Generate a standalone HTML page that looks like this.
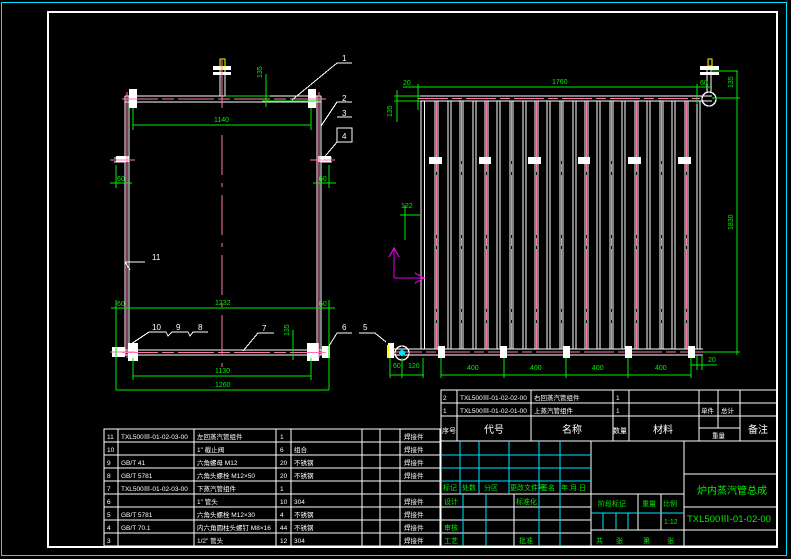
<!DOCTYPE html>
<html><head><meta charset="utf-8"><style>
html,body{margin:0;padding:0;background:#000;}
svg{display:block;}
text{font-family:"Liberation Sans","Noto Sans CJK SC",sans-serif;}
</style></head><body>
<svg width="791" height="559" viewBox="0 0 791 559" xmlns="http://www.w3.org/2000/svg" shape-rendering="crispEdges">
<rect width="791" height="559" fill="#000"/>
<rect x="1.5" y="2.5" width="785" height="553" fill="none" stroke="#00e5ff" stroke-width="1"/>
<rect x="48" y="12" width="729" height="535" fill="none" stroke="#fff" stroke-width="2"/>

<!-- LEFT VIEW -->
<g stroke="#fff" stroke-width="1.3" fill="none">
<line x1="125" y1="96" x2="321" y2="96"/><line x1="125" y1="102" x2="321" y2="102"/>
<line x1="125" y1="350" x2="321" y2="350"/><line x1="125" y1="355" x2="321" y2="355"/>
<line x1="125" y1="96" x2="125" y2="355"/><line x1="129" y1="96" x2="129" y2="355"/>
<line x1="317" y1="96" x2="317" y2="355"/><line x1="321" y1="96" x2="321" y2="355"/>
<line x1="220" y1="68" x2="220" y2="96"/><line x1="225" y1="68" x2="225" y2="96"/>
<line x1="112" y1="350" x2="125" y2="350"/><line x1="112" y1="355" x2="125" y2="355"/>
<line x1="321" y1="350" x2="330" y2="350"/><line x1="321" y1="355" x2="330" y2="355"/>
<line x1="114" y1="158" x2="125" y2="158"/><line x1="114" y1="162" x2="125" y2="162"/>
<line x1="321" y1="158" x2="332" y2="158"/><line x1="321" y1="162" x2="332" y2="162"/>
</g>
<g fill="#fff">
<rect x="129" y="89" width="8" height="19"/><rect x="308" y="89" width="8" height="19"/>
<rect x="213" y="66" width="18" height="4"/><rect x="213" y="72" width="18" height="3"/>
<rect x="128" y="343" width="10" height="18"/><rect x="307" y="343" width="12" height="18"/>
<rect x="116" y="156" width="13" height="6"/><rect x="318" y="156" width="13" height="6"/>
<rect x="112" y="347" width="13" height="10"/><rect x="322" y="346" width="8" height="12"/>
</g>
<g stroke="#ff77b0" stroke-width="1" fill="none">
<line x1="122" y1="99" x2="326" y2="99" stroke-dasharray="36 4 12 4"/>
<line x1="122" y1="352.5" x2="326" y2="352.5" stroke-dasharray="36 4 12 4"/>
<line x1="127" y1="92" x2="127" y2="358"/><line x1="319" y1="92" x2="319" y2="358"/>
<line x1="222" y1="60" x2="222" y2="108"/>
<line x1="222" y1="135" x2="222" y2="375" stroke-dasharray="40 8 4 8"/>
<line x1="110" y1="160" x2="135" y2="160"/><line x1="310" y1="160" x2="335" y2="160"/>
<line x1="110" y1="352" x2="135" y2="352"/>
</g>
<rect x="220" y="59" width="5" height="9" fill="none" stroke="#ff0" stroke-width="1"/>
<g stroke="#00ee00" stroke-width="1" fill="none">
<line x1="133" y1="125" x2="311" y2="125"/><line x1="133" y1="108" x2="133" y2="130"/><line x1="311" y1="108" x2="311" y2="130"/>
<line x1="266" y1="74" x2="266" y2="107"/><line x1="225" y1="96" x2="270" y2="96"/><line x1="262" y1="101" x2="320" y2="101"/>
<line x1="110" y1="183" x2="132" y2="183"/><line x1="116" y1="165" x2="116" y2="188"/>
<line x1="313" y1="183" x2="336" y2="183"/><line x1="329" y1="165" x2="329" y2="188"/>
<line x1="111" y1="308" x2="335" y2="308"/>
<line x1="116" y1="300" x2="116" y2="390"/><line x1="329" y1="300" x2="329" y2="390"/>
<line x1="133" y1="376" x2="311" y2="376"/><line x1="133" y1="358" x2="133" y2="380"/><line x1="311" y1="358" x2="311" y2="380"/>
<line x1="116" y1="390" x2="329" y2="390"/>
<line x1="293" y1="330" x2="293" y2="360"/>
</g>
<g fill="#00ee00" font-size="7">
<text x="214" y="122">1140</text><text x="215" y="305">1232</text><text x="215" y="373">1130</text><text x="215" y="387">1260</text>
<text x="117" y="181">60</text><text x="319" y="181">60</text><text x="117" y="306">60</text><text x="319" y="306">60</text>
<text x="264" y="80" transform="rotate(-90 262 80)">135</text><text x="291" y="338" transform="rotate(-90 289 338)">135</text>
</g>
<g stroke="#fff" stroke-width="1" fill="none">
<polyline points="292,100 337,63 352,63"/><polyline points="321,126 337,102 352,102"/>
<line x1="337" y1="117" x2="352" y2="117"/><rect x="337" y="128" width="15" height="14"/>
<polyline points="322,160 337,142"/>
<polyline points="128,346 149,332 166,332 168,336 172,332 188,332 190,336 193,332 208,332"/>
<polyline points="243,351 258,333 274,333"/>
<polyline points="329,346 337,333 352,333"/>
<polyline points="386,342 375,333 359,333"/>
<polyline points="130,270 125,262 145,262"/>
</g>
<g fill="#fff" font-size="8">
<text x="342" y="61">1</text><text x="342" y="101">2</text><text x="342" y="116">3</text><text x="342" y="139">4</text>
<text x="152" y="330">10</text><text x="176" y="330">9</text><text x="198" y="330">8</text><text x="262" y="331">7</text>
<text x="342" y="330">6</text><text x="363" y="330">5</text><text x="152" y="260">11</text>
</g>

<!-- RIGHT VIEW -->
<g stroke="#fff" stroke-width="1.4">
<line x1="418" y1="96" x2="712" y2="96"/><line x1="418" y1="101" x2="712" y2="101"/>
<line x1="392" y1="349" x2="703" y2="349"/><line x1="392" y1="355" x2="703" y2="355"/>
</g>
<g stroke="#ff77b0" stroke-width="1">
<line x1="418" y1="98.5" x2="700" y2="98.5" stroke-dasharray="30 4 10 4"/>
<line x1="392" y1="352" x2="703" y2="352" stroke-dasharray="30 4 10 4"/>
</g>
<g stroke="#fff" stroke-width="1.2">
<line x1="421" y1="101" x2="421" y2="349"/><line x1="424.5" y1="101" x2="424.5" y2="349"/>
<line x1="435" y1="101" x2="435" y2="349"/><line x1="438" y1="101" x2="438" y2="349"/>
<line x1="448" y1="101" x2="448" y2="349"/><line x1="451" y1="101" x2="451" y2="349"/>
<line x1="460" y1="101" x2="460" y2="349"/><line x1="463" y1="101" x2="463" y2="349"/>
<line x1="473" y1="101" x2="473" y2="349"/><line x1="476" y1="101" x2="476" y2="349"/>
<line x1="485" y1="101" x2="485" y2="349"/><line x1="488" y1="101" x2="488" y2="349"/>
<line x1="497" y1="101" x2="497" y2="349"/><line x1="500" y1="101" x2="500" y2="349"/>
<line x1="510" y1="101" x2="510" y2="349"/><line x1="513" y1="101" x2="513" y2="349"/>
<line x1="523" y1="101" x2="523" y2="349"/><line x1="526" y1="101" x2="526" y2="349"/>
<line x1="535" y1="101" x2="535" y2="349"/><line x1="538" y1="101" x2="538" y2="349"/>
<line x1="547" y1="101" x2="547" y2="349"/><line x1="550" y1="101" x2="550" y2="349"/>
<line x1="560" y1="101" x2="560" y2="349"/><line x1="563" y1="101" x2="563" y2="349"/>
<line x1="573" y1="101" x2="573" y2="349"/><line x1="576" y1="101" x2="576" y2="349"/>
<line x1="585" y1="101" x2="585" y2="349"/><line x1="588" y1="101" x2="588" y2="349"/>
<line x1="597" y1="101" x2="597" y2="349"/><line x1="600" y1="101" x2="600" y2="349"/>
<line x1="610" y1="101" x2="610" y2="349"/><line x1="613" y1="101" x2="613" y2="349"/>
<line x1="622" y1="101" x2="622" y2="349"/><line x1="625" y1="101" x2="625" y2="349"/>
<line x1="635" y1="101" x2="635" y2="349"/><line x1="638" y1="101" x2="638" y2="349"/>
<line x1="647" y1="101" x2="647" y2="349"/><line x1="650" y1="101" x2="650" y2="349"/>
<line x1="660" y1="101" x2="660" y2="349"/><line x1="663" y1="101" x2="663" y2="349"/>
<line x1="672" y1="101" x2="672" y2="349"/><line x1="675" y1="101" x2="675" y2="349"/>
<line x1="685" y1="101" x2="685" y2="349"/><line x1="688" y1="101" x2="688" y2="349"/>
<line x1="697" y1="101" x2="697" y2="349"/><line x1="700" y1="101" x2="700" y2="349"/>
</g>
<g stroke="#ff77b0" stroke-width="1" stroke-dasharray="60 3 8 3">
<line x1="436.5" y1="101" x2="436.5" y2="349"/><line x1="461.5" y1="101" x2="461.5" y2="349"/>
<line x1="486.5" y1="101" x2="486.5" y2="349"/><line x1="511.5" y1="101" x2="511.5" y2="349"/>
<line x1="536.5" y1="101" x2="536.5" y2="349"/><line x1="561.5" y1="101" x2="561.5" y2="349"/>
<line x1="586.5" y1="101" x2="586.5" y2="349"/><line x1="611.5" y1="101" x2="611.5" y2="349"/>
<line x1="636.5" y1="101" x2="636.5" y2="349"/><line x1="661.5" y1="101" x2="661.5" y2="349"/>
<line x1="686.5" y1="101" x2="686.5" y2="349"/>
</g>
<g fill="#fff">
<rect x="429" y="157" width="13" height="7"/><rect x="479" y="157" width="12" height="7"/><rect x="528" y="157" width="13" height="7"/>
<rect x="578" y="157" width="12" height="7"/><rect x="628" y="157" width="13" height="7"/><rect x="678" y="157" width="13" height="7"/>
<rect x="438" y="346" width="7" height="12"/><rect x="500" y="346" width="7" height="12"/><rect x="563" y="346" width="7" height="12"/>
<rect x="625" y="346" width="7" height="12"/><rect x="688" y="346" width="7" height="12"/>
<rect x="700" y="66" width="19" height="4"/><rect x="700" y="72" width="19" height="3"/>
<rect x="388" y="343" width="6" height="15"/>
</g>
<g fill="none" stroke="#fff" stroke-width="1.3">
<circle cx="709" cy="99" r="7"/><circle cx="402" cy="353" r="7"/>
<line x1="707" y1="66" x2="707" y2="92"/><line x1="711" y1="66" x2="711" y2="92"/>
</g>
<circle cx="402" cy="353" r="3" fill="#00e5ff"/>
<rect x="387" y="345" width="2" height="13" fill="#ff0"/>
<rect x="708" y="59" width="4" height="7" fill="none" stroke="#ff0"/>
<g stroke="#e000e0" stroke-width="1.2" fill="none">
<polyline points="394,278 394,248"/><polyline points="389,257 394,248 399,257"/>
<polyline points="394,278 424,278"/><polyline points="415,273 424,278 415,283"/>
</g>
<g stroke="#00ee00" stroke-width="1" fill="none">
<line x1="403" y1="87" x2="712" y2="87"/><line x1="418" y1="84" x2="418" y2="110"/><line x1="697" y1="84" x2="697" y2="104"/>
<line x1="394" y1="96" x2="420" y2="96"/><line x1="394" y1="101" x2="420" y2="101"/><line x1="397" y1="90" x2="397" y2="122"/>
<line x1="712" y1="71" x2="738" y2="71"/><line x1="712" y1="98" x2="740" y2="98"/>
<line x1="737" y1="71" x2="737" y2="355"/><line x1="703" y1="352" x2="740" y2="352"/>
<line x1="400" y1="215" x2="420" y2="215"/><line x1="405" y1="205" x2="405" y2="240"/>
<line x1="390" y1="375" x2="424" y2="375"/><line x1="390" y1="358" x2="390" y2="378"/><line x1="402" y1="358" x2="402" y2="378"/><line x1="423" y1="358" x2="423" y2="378"/>
<line x1="441" y1="375" x2="691" y2="375"/><line x1="441" y1="358" x2="441" y2="378"/><line x1="504" y1="358" x2="504" y2="378"/>
<line x1="566" y1="358" x2="566" y2="378"/><line x1="628" y1="358" x2="628" y2="378"/><line x1="691" y1="358" x2="691" y2="378"/>
<line x1="691" y1="365" x2="717" y2="365"/><line x1="697" y1="355" x2="697" y2="370"/><line x1="702" y1="355" x2="702" y2="370"/>
</g>
<g fill="#00ee00" font-size="7">
<text x="552" y="84">1760</text><text x="403" y="85">20</text><text x="700" y="85">60</text>
<text x="393" y="368">60</text><text x="408" y="368">120</text>
<text x="467" y="370">400</text><text x="530" y="370">400</text><text x="592" y="370">400</text><text x="655" y="370">400</text>
<text x="708" y="362">20</text><text x="401" y="208">122</text>
<text x="392" y="117" transform="rotate(-90 392 117)">135</text>
<text x="735" y="90" transform="rotate(-90 733 90)">135</text>
<text x="735" y="232" transform="rotate(-90 733 232)">1830</text>
</g>

<!-- LEFT PARTS TABLE -->
<g stroke="#fff" stroke-width="1.3" fill="none">
<rect x="104" y="429" width="336" height="117"/>
<line x1="104" y1="442" x2="440" y2="442"/><line x1="104" y1="455" x2="440" y2="455"/>
<line x1="104" y1="468" x2="440" y2="468"/><line x1="104" y1="481" x2="440" y2="481"/>
<line x1="104" y1="494" x2="440" y2="494"/><line x1="104" y1="507" x2="440" y2="507"/>
<line x1="104" y1="520" x2="440" y2="520"/><line x1="104" y1="533" x2="440" y2="533"/>
<line x1="118" y1="429" x2="118" y2="546"/><line x1="194" y1="429" x2="194" y2="546"/>
<line x1="276" y1="429" x2="276" y2="546"/><line x1="291" y1="429" x2="291" y2="546"/>
<line x1="362" y1="429" x2="362" y2="546"/><line x1="380" y1="429" x2="380" y2="546"/>
<line x1="400" y1="429" x2="400" y2="546"/>
</g>
<g fill="#fff" font-size="6.5">
<text x="107" y="439">11</text><text x="121" y="439">TXL500Ⅲ-01-02-03-00</text><text x="197" y="439">左回蒸汽管组件</text><text x="280" y="439">1</text>
<text x="107" y="452">10</text><text x="197" y="452">1" 截止阀</text><text x="280" y="452">6</text><text x="294" y="452">组合</text>
<text x="107" y="465">9</text><text x="121" y="465">GB/T 41</text><text x="197" y="465">六角螺母 M12</text><text x="280" y="465">20</text><text x="294" y="465">不锈钢</text>
<text x="107" y="478">8</text><text x="121" y="478">GB/T 5781</text><text x="197" y="478">六角头螺栓 M12×50</text><text x="280" y="478">20</text><text x="294" y="478">不锈钢</text>
<text x="107" y="491">7</text><text x="121" y="491">TXL500Ⅲ-01-02-03-00</text><text x="197" y="491">下蒸汽管组件</text><text x="280" y="491">1</text>
<text x="107" y="504">6</text><text x="197" y="504">1" 管头</text><text x="280" y="504">10</text><text x="294" y="504">304</text>
<text x="107" y="517">5</text><text x="121" y="517">GB/T 5781</text><text x="197" y="517">六角头螺栓 M12×30</text><text x="280" y="517">4</text><text x="294" y="517">不锈钢</text>
<text x="107" y="530">4</text><text x="121" y="530">GB/T 70.1</text><text x="197" y="530">内六角圆柱头螺钉 M8×16</text><text x="280" y="530">44</text><text x="294" y="530">不锈钢</text>
<text x="107" y="543">3</text><text x="197" y="543">1/2" 管头</text><text x="280" y="543">12</text><text x="294" y="543">304</text>
<text x="404" y="439">焊接件</text><text x="404" y="452">焊接件</text><text x="404" y="465">焊接件</text><text x="404" y="478">焊接件</text>
<text x="404" y="504">焊接件</text><text x="404" y="517">焊接件</text><text x="404" y="530">焊接件</text><text x="404" y="543">焊接件</text>
</g>

<!-- TITLE BLOCK -->
<g stroke="#fff" stroke-width="1.3" fill="none">
<rect x="441" y="390" width="336" height="156"/>
<line x1="441" y1="403" x2="777" y2="403"/><line x1="441" y1="416" x2="777" y2="416"/><line x1="441" y1="441" x2="777" y2="441"/>
<line x1="457" y1="390" x2="457" y2="441"/><line x1="531" y1="390" x2="531" y2="441"/><line x1="613" y1="390" x2="613" y2="441"/>
<line x1="629" y1="390" x2="629" y2="441"/><line x1="699" y1="390" x2="699" y2="441"/><line x1="718" y1="390" x2="718" y2="428"/>
<line x1="740" y1="390" x2="740" y2="441"/><line x1="699" y1="428" x2="740" y2="428"/>
<line x1="591" y1="441" x2="591" y2="546"/><line x1="684" y1="441" x2="684" y2="546"/>
<line x1="684" y1="474" x2="777" y2="474"/><line x1="684" y1="507" x2="777" y2="507"/><line x1="684" y1="530" x2="777" y2="530"/>
<line x1="591" y1="494" x2="684" y2="494"/><line x1="591" y1="530" x2="684" y2="530"/>
<line x1="638" y1="494" x2="638" y2="530"/><line x1="661" y1="494" x2="661" y2="530"/>
<line x1="441" y1="494" x2="591" y2="494"/><line x1="441" y1="507" x2="591" y2="507"/><line x1="441" y1="520" x2="591" y2="520"/><line x1="441" y1="533" x2="591" y2="533"/>
<line x1="514" y1="494" x2="514" y2="546"/>
<line x1="420" y1="429" x2="441" y2="429"/>
</g>
<g stroke="#00e5ff" stroke-width="1" fill="none">
<line x1="441" y1="455" x2="591" y2="455"/><line x1="441" y1="468" x2="591" y2="468"/><line x1="441" y1="481" x2="591" y2="481"/>
<line x1="460" y1="441" x2="460" y2="494"/><line x1="479" y1="441" x2="479" y2="494"/><line x1="509" y1="441" x2="509" y2="494"/>
<line x1="539" y1="441" x2="539" y2="546"/><line x1="560" y1="441" x2="560" y2="546"/>
<line x1="463" y1="494" x2="463" y2="546"/><line x1="486" y1="494" x2="486" y2="546"/>
<line x1="591" y1="513" x2="684" y2="513"/><line x1="603" y1="513" x2="603" y2="530"/><line x1="616" y1="513" x2="616" y2="530"/><line x1="628" y1="513" x2="628" y2="530"/>
</g>
<g fill="#fff" font-size="6.5">
<text x="443" y="400">2</text><text x="460" y="400">TXL500Ⅲ-01-02-02-00</text><text x="534" y="400">右回蒸汽管组件</text><text x="616" y="400">1</text>
<text x="443" y="413">1</text><text x="460" y="413">TXL500Ⅲ-01-02-01-00</text><text x="534" y="413">上蒸汽管组件</text><text x="616" y="413">1</text>
</g>
<g fill="#fff" font-size="10">
<text x="442" y="433" font-size="7">序号</text><text x="484" y="433">代号</text><text x="562" y="433">名称</text>
<text x="613" y="433" font-size="7">数量</text><text x="653" y="433">材料</text><text x="748" y="433">备注</text>
</g>
<g fill="#fff" font-size="6.5"><text x="701" y="413">单件</text><text x="721" y="413">总计</text><text x="712" y="438">重量</text></g>
<g fill="#00ee00" font-size="7">
<text x="443" y="490">标记</text><text x="462" y="490">处数</text><text x="484" y="490">分区</text><text x="510" y="490">更改文件号</text><text x="541" y="490">签名</text><text x="561" y="490">年.月.日</text>
<text x="444" y="504">设计</text><text x="516" y="504">标准化</text><text x="444" y="530">审核</text><text x="444" y="543">工艺</text><text x="519" y="543">批准</text>
<text x="598" y="506">阶段标记</text><text x="642" y="506">重量</text><text x="663" y="506">比例</text><text x="664" y="524">1:12</text>
<text x="596" y="543">共</text><text x="616" y="543">张</text><text x="643" y="543">第</text><text x="667" y="543">张</text>
</g>
<g fill="#00ee00" font-size="10">
<text x="697" y="494">炉内蒸汽管总成</text><text x="687" y="522" font-size="9.5">TXL500Ⅲ-01-02-00</text>
</g>
</svg>
</body></html>
